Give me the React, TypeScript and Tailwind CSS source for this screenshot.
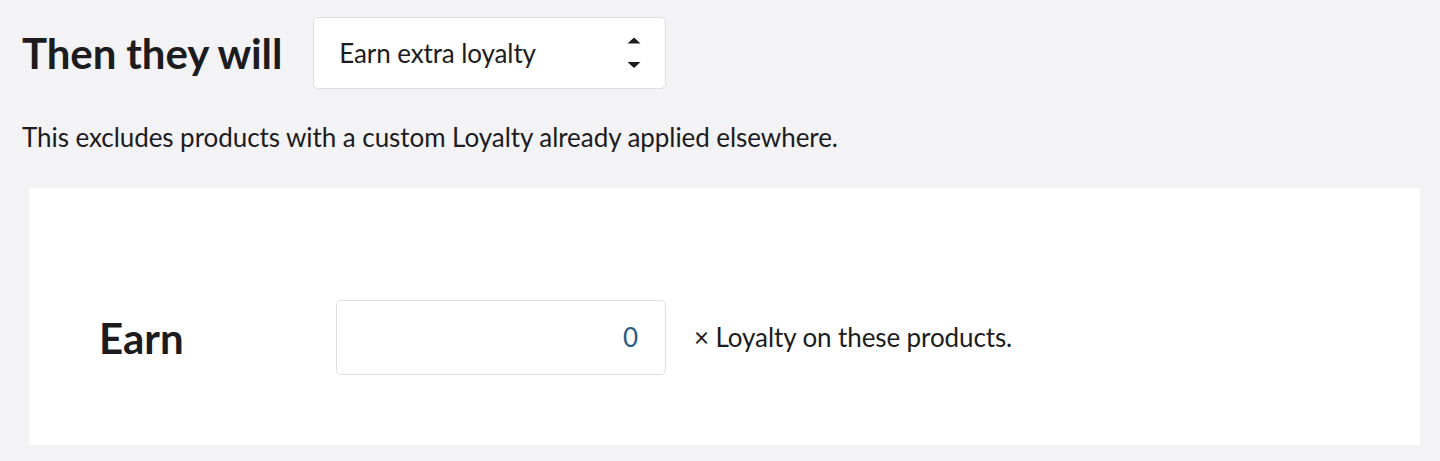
const SelectArrows = () => (
  <svg width="14" height="32" viewBox="0 0 14 32" className="text-[#1c1c1e]">
    <path d="M7 0.5 L13.5 6.5 L0.5 6.5 Z" fill="currentColor" />
    <path d="M0.5 25 L13.5 25 L7 31 Z" fill="currentColor" />
  </svg>
)

const App = () => {
  return (
    <div className="min-h-[461px] bg-[#f3f2f5] px-[22px] pt-[17px] font-['Lato',sans-serif] text-[#1c1c1e]">
      <div className="flex items-center gap-[31px]">
        <h2 className="text-[42px] font-bold leading-none tracking-[-0.1px]">Then they will</h2>
        <div className="flex h-[72px] w-[353px] items-center justify-between rounded-[5px] border border-[#dfdee3] bg-white pl-[25px] pr-[24px] text-[26px]">
          <span className="tracking-[-0.1px]">Earn extra loyalty</span>
          <SelectArrows />
        </div>
      </div>
      <p className="mt-[33px] text-[26px] leading-[30px] tracking-[-0.06px]">
        This excludes products with a custom Loyalty already applied elsewhere.
      </p>
      <div className="ml-[7px] mr-[-2px] mt-[36px] flex h-[257px] items-center bg-white pl-[70px] pt-[42px]">
        <span className="w-[237px] text-[42px] font-bold leading-none">Earn</span>
        <div className="flex h-[75px] w-[330px] items-center justify-end rounded-[5px] border border-[#dfdee3] bg-white pr-[27px] text-[26px] text-[#2c5a86]">
          0
        </div>
        <span className="ml-[28px] text-[26px] tracking-[-0.1px]">× Loyalty on these products.</span>
      </div>
    </div>
  )
}

export default App
